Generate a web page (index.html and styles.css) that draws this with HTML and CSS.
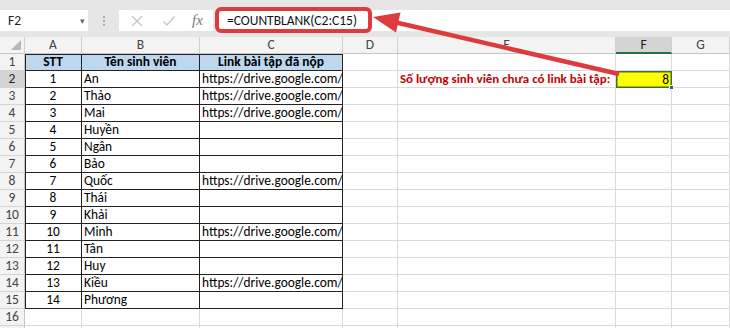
FILE: index.html
```html
<!DOCTYPE html>
<html>
<head>
<meta charset="utf-8">
<link rel="stylesheet" href="styles.css">
</head>
<body>
<div class="app">
  <div class="fbar">
    <div class="namebox"><span>F2</span><span class="dd">▾</span></div>
    <div class="grip"><i></i><i></i><i></i></div>
    <div class="ctrls">
      <svg class="ic" width="14" height="14" viewBox="0 0 14 14"><path d="M2 2L12 12M12 2L2 12" stroke="#c4c4c4" stroke-width="1.3" fill="none"/></svg>
      <svg class="ic" width="14" height="14" viewBox="0 0 14 14"><path d="M1.5 7.5L5 11L12.5 2.5" stroke="#c4c4c4" stroke-width="1.3" fill="none"/></svg>
      <span class="fx">fx</span>
    </div>
    <div class="finput"><span class="ftext">=COUNTBLANK(C2:C15)</span></div>
  </div>
  <div class="sheet">
    <div class="row hdr">
      <div class="c rh corner"><span class="tri"></span></div>
      <div class="c ch">A</div><div class="c ch">B</div><div class="c ch">C</div><div class="c ch">D</div><div class="c ch">E</div><div class="c ch sel">F</div><div class="c ch">G</div>
    </div>
    <div class="row">
      <div class="c rh">1</div>
      <div class="c t th tl tt">STT</div><div class="c t th tt">Tên sinh viên</div><div class="c t th tt">Link bài tập đã nộp</div>
      <div class="c"></div><div class="c"></div><div class="c"></div><div class="c"></div>
    </div>
    <div class="row">
      <div class="c rh rsel">2</div>
      <div class="c t tl num">1</div><div class="c t">An</div><div class="c t lk">https://drive.google.com/f</div>
      <div class="c"></div><div class="c lbl">Số lượng sinh viên chưa có link bài tập:</div><div class="c res">8<span class="handle"></span></div><div class="c"></div>
    </div>
    <div class="row">
      <div class="c rh">3</div>
      <div class="c t tl num">2</div><div class="c t">Thảo</div><div class="c t lk">https://drive.google.com/f</div>
      <div class="c"></div><div class="c"></div><div class="c"></div><div class="c"></div>
    </div>
    <div class="row">
      <div class="c rh">4</div>
      <div class="c t tl num">3</div><div class="c t">Mai</div><div class="c t lk">https://drive.google.com/f</div>
      <div class="c"></div><div class="c"></div><div class="c"></div><div class="c"></div>
    </div>
    <div class="row">
      <div class="c rh">5</div>
      <div class="c t tl num">4</div><div class="c t">Huyền</div><div class="c t"></div>
      <div class="c"></div><div class="c"></div><div class="c"></div><div class="c"></div>
    </div>
    <div class="row">
      <div class="c rh">6</div>
      <div class="c t tl num">5</div><div class="c t">Ngân</div><div class="c t"></div>
      <div class="c"></div><div class="c"></div><div class="c"></div><div class="c"></div>
    </div>
    <div class="row">
      <div class="c rh">7</div>
      <div class="c t tl num">6</div><div class="c t">Bảo</div><div class="c t"></div>
      <div class="c"></div><div class="c"></div><div class="c"></div><div class="c"></div>
    </div>
    <div class="row">
      <div class="c rh">8</div>
      <div class="c t tl num">7</div><div class="c t">Quốc</div><div class="c t lk">https://drive.google.com/f</div>
      <div class="c"></div><div class="c"></div><div class="c"></div><div class="c"></div>
    </div>
    <div class="row">
      <div class="c rh">9</div>
      <div class="c t tl num">8</div><div class="c t">Thái</div><div class="c t"></div>
      <div class="c"></div><div class="c"></div><div class="c"></div><div class="c"></div>
    </div>
    <div class="row">
      <div class="c rh">10</div>
      <div class="c t tl num">9</div><div class="c t">Khải</div><div class="c t"></div>
      <div class="c"></div><div class="c"></div><div class="c"></div><div class="c"></div>
    </div>
    <div class="row">
      <div class="c rh">11</div>
      <div class="c t tl num">10</div><div class="c t">Minh</div><div class="c t lk">https://drive.google.com/f</div>
      <div class="c"></div><div class="c"></div><div class="c"></div><div class="c"></div>
    </div>
    <div class="row">
      <div class="c rh">12</div>
      <div class="c t tl num">11</div><div class="c t">Tân</div><div class="c t"></div>
      <div class="c"></div><div class="c"></div><div class="c"></div><div class="c"></div>
    </div>
    <div class="row">
      <div class="c rh">13</div>
      <div class="c t tl num">12</div><div class="c t">Huy</div><div class="c t"></div>
      <div class="c"></div><div class="c"></div><div class="c"></div><div class="c"></div>
    </div>
    <div class="row">
      <div class="c rh">14</div>
      <div class="c t tl num">13</div><div class="c t">Kiều</div><div class="c t lk">https://drive.google.com/f</div>
      <div class="c"></div><div class="c"></div><div class="c"></div><div class="c"></div>
    </div>
    <div class="row">
      <div class="c rh">15</div>
      <div class="c t tl num">14</div><div class="c t">Phương</div><div class="c t"></div>
      <div class="c"></div><div class="c"></div><div class="c"></div><div class="c"></div>
    </div>
    <div class="row">
      <div class="c rh">16</div>
      <div class="c"></div><div class="c"></div><div class="c"></div>
      <div class="c"></div><div class="c"></div><div class="c"></div><div class="c"></div>
    </div>
    <div class="row">
      <div class="c rh">17</div>
      <div class="c"></div><div class="c"></div><div class="c"></div>
      <div class="c"></div><div class="c"></div><div class="c"></div><div class="c"></div>
    </div>
  </div>
  <svg class="annot" width="730" height="328" viewBox="0 0 730 328">
    <rect x="217" y="9" width="153" height="22" rx="4" ry="4" fill="none" stroke="#dd3b3e" stroke-width="4"/>
    <line x1="619" y1="74" x2="394" y2="22" stroke="#dd3b3e" stroke-width="4.5"/>
    <polygon points="373,17 396,32.5 400.5,12.5" fill="#dd3b3e"/>
  </svg>
</div>
</body>
</html>
```
FILE: styles.css
```css
* { box-sizing: border-box; }
html, body { margin: 0; padding: 0; }
body {
  width: 730px;
  height: 328px;
  overflow: hidden;
  background: #ffffff;
  font-family: Carlito, Calibri, Lato, sans-serif;
  font-size: 13.4px;
  color: #000;
}
.app { position: relative; width: 730px; height: 328px; overflow: hidden; }

/* formula bar */
.fbar {
  display: flex;
  align-items: flex-start;
  height: 37px;
  padding-top: 10px;
  background: #e6e6e6;
}
.namebox {
  width: 88px;
  height: 21px;
  background: #fff;
  display: flex;
  align-items: center;
  justify-content: space-between;
  padding: 0 3px 0 8px;
  font-size: 13.5px;
  color: #222;
}
.namebox .dd { font-size: 9px; color: #666; }
.grip {
  width: 31px;
  height: 21px;
  display: flex;
  flex-direction: column;
  align-items: center;
  justify-content: center;
  gap: 2px;
}
.grip i { display: block; width: 2px; height: 2px; background: #aaa; }
.ctrls {
  width: 94px;
  height: 21px;
  background: #fff;
  display: flex;
  align-items: center;
  padding-left: 11px;
  gap: 18px;
}
.ctrls .ic { display: block; }
.fx {
  font-family: "Liberation Serif", serif;
  font-style: italic;
  font-size: 15px;
  color: #777;
  margin-left: -2px;
}
.finput {
  flex: 1;
  height: 21px;
  margin-left: 2px;
  background: #fff;
  display: flex;
  align-items: center;
  padding-left: 12px;
}
.ftext { font-size: 13.5px; color: #111; }

/* sheet */
.sheet { display: flex; flex-direction: column; }
.row {
  display: grid;
  grid-template-columns: 25px 57px 118px 143px 55px 218px 56px 58px;
  height: 17px;
}
.c {
  height: 17px;
  border-right: 1px solid #dadada;
  border-bottom: 1px solid #dadada;
  line-height: 16px;
  white-space: nowrap;
  overflow: hidden;
  padding: 0 2px;
}
.hdr .c { background: #f3f3f3; border-right-color: #d0d0d0; border-bottom-color: #c6c6c6; text-align: center; color: #444; font-size: 13.5px; }
.hdr .ch.sel { background: #d4d4d4; border-bottom: 2px solid #217346; color: #222; }
.corner { position: relative; }
.tri {
  position: absolute;
  right: 3px;
  bottom: 3px;
  width: 0; height: 0;
  border-left: 10px solid transparent;
  border-bottom: 10px solid #b8b8b8;
}
.rh {
  background: #f3f3f3;
  border-right-color: #c6c6c6;
  border-bottom-color: #d4d4d4;
  text-align: center;
  color: #444;
  font-size: 13.5px;
  padding: 0;
}
.rh.rsel { background: #d4d4d4; color: #222; }

.t { border-right-color: #222; border-bottom-color: #222; }
.tl { box-shadow: inset 1px 0 0 #222; }
.tt { box-shadow: inset 0 1px 0 #222; }
.tl.tt { box-shadow: inset 1px 1px 0 #222; }
.th { background: #bdd7ee; font-weight: bold; text-align: center; }
.num { text-align: center; }
.lk { text-overflow: clip; }

.lbl {
  text-align: right;
  color: #c00000;
  font-weight: bold;
  font-size: 12.9px;
  padding-right: 5px;
}
.res {
  position: relative;
  background: #ffff00;
  border: 1px solid #3f6f3a;
  box-shadow: inset 0 0 0 0.5px #3f6f3a;
  text-align: right;
  padding-right: 2px;
  overflow: visible;
}
.handle {
  position: absolute;
  right: -3px;
  bottom: -3px;
  width: 5px;
  height: 5px;
  background: #217346;
  border: 1px solid #fff;
}

.annot { position: absolute; left: 0; top: 0; pointer-events: none; }
```
